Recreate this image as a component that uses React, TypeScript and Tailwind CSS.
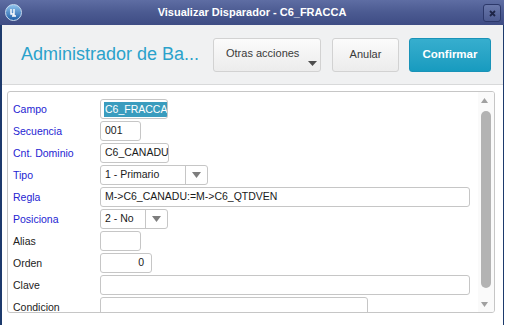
import React from "react";

const font = { fontFamily: '"Liberation Sans", Arial, sans-serif' };

function Label({ text, blue }: { text: string; blue?: boolean }) {
  return (
    <div className={`w-[87px] shrink-0 text-[10.5px] leading-[20px] ${blue ? "text-[#2424d2]" : "text-[#222]"}`}>
      {text}
    </div>
  );
}

function Input({ w, value, right, selected }: { w: number; value?: string; right?: boolean; selected?: boolean }) {
  return (
    <div
      className={`h-[20px] border border-[#c6c6c6] rounded-[3px] bg-white flex items-center px-[3px] text-[10.5px] text-[#1a1a1a] overflow-hidden whitespace-nowrap ${right ? "justify-end pr-[6px]" : ""}`}
      style={{ width: w }}
    >
      {selected ? (
        <span className="bg-[#3a9cbe] text-white px-[1px] leading-[15px]">{value}</span>
      ) : (
        <span className="px-[1px]">{value}</span>
      )}
    </div>
  );
}

function Select({ w, divider, value }: { w: number; divider: number; value: string }) {
  return (
    <div
      className="h-[20px] border border-[#c6c6c6] rounded-[3px] bg-white flex items-center text-[10.5px] text-[#1a1a1a] overflow-hidden"
      style={{ width: w }}
    >
      <div className="h-full flex items-center pl-[4px] border-r border-[#c6c6c6]" style={{ width: divider }}>
        {value}
      </div>
      <div className="flex-1 flex items-center justify-center">
        <svg width="9" height="6" viewBox="0 0 9 6">
          <path d="M0 0 H9 L4.5 6 Z" fill="#7d7d7d" />
        </svg>
      </div>
    </div>
  );
}

function Row({ children }: { children: React.ReactNode }) {
  return <div className="flex items-center h-[20px]">{children}</div>;
}

export default function App() {
  return (
    <div className="w-[505px] h-[325px] overflow-hidden bg-white" style={font}>
      <div className="w-[504px] h-full flex flex-col">
        {/* Title bar */}
        <div className="h-[25px] shrink-0 bg-gradient-to-b from-[#5e6da3] via-[#4b5a91] to-[#3e4c84] relative flex items-center justify-center">
          <div className="absolute left-[5px] top-[4px] w-[17px] h-[17px] rounded-full bg-gradient-to-b from-[#8fc3ec] to-[#1d5fa8] border border-[#c8dcf0] flex items-center justify-center">
            <svg width="9" height="9" viewBox="0 0 9 9">
              <path d="M2 1 V6 H5 M5 1 V8 M3 8 H7" stroke="#fff" strokeWidth="1.4" fill="none" />
            </svg>
          </div>
          <span className="text-white font-bold text-[11px]">Visualizar Disparador - C6_FRACCA</span>
          <div className="absolute right-[3px] top-[4px] w-[18px] h-[18px] rounded-[3px] border border-[#2c386a] bg-gradient-to-b from-[#6a78ab] to-[#4d5b91] flex items-center justify-center">
            <svg width="7" height="7" viewBox="0 0 7 7">
              <path d="M1 1 L6 6 M6 1 L1 6" stroke="#1e2547" strokeWidth="1.8" />
            </svg>
          </div>
        </div>

        {/* Content */}
        <div className="flex-1 flex flex-col border-l-2 border-r border-[#1d3a6c] bg-white">
          {/* Header */}
          <div className="h-[60px] shrink-0 bg-[#f0f1f2] border-b border-[#d8d9da] flex items-center pl-[19px] pr-[12px]">
            <div className="text-[18px] text-[#2ba2cb] flex-1 whitespace-nowrap">Administrador de Ba...</div>
            <div className="relative w-[108px] h-[34px] rounded-[3px] border border-[#d2d2d2] bg-gradient-to-b from-[#fbfbfb] to-[#ececec] flex items-center pl-[12px] pb-[2px] text-[11px] text-[#3a3a3a]">
              Otras acciones
              <svg className="absolute right-[3px] bottom-[5px]" width="9" height="5" viewBox="0 0 9 5">
                <path d="M0 0 H9 L4.5 5 Z" fill="#4d4d4d" />
              </svg>
            </div>
            <div className="ml-[11px] w-[67px] h-[34px] rounded-[3px] border border-[#d2d2d2] bg-gradient-to-b from-[#fbfbfb] to-[#ececec] flex items-center justify-center text-[11px] text-[#3a3a3a]">
              Anular
            </div>
            <div className="ml-[10px] w-[82px] h-[34px] rounded-[3px] border border-[#1993b8] bg-gradient-to-b from-[#36aece] to-[#179bbf] flex items-center justify-center text-[11.5px] font-bold text-white">
              Confirmar
            </div>
          </div>

          {/* Form panel */}
          <div className="mt-[6px] ml-[5px] mr-[8px] h-[222px] border border-[#c6c6c6] rounded-[3px] flex overflow-hidden">
            <div className="flex-1 overflow-hidden pt-[7px] pl-[5px] flex flex-col gap-[2px]">
              <Row>
                <Label text="Campo" blue />
                <Input w={68} value="C6_FRACCA" selected />
              </Row>
              <Row>
                <Label text="Secuencia" blue />
                <Input w={41} value="001" />
              </Row>
              <Row>
                <Label text="Cnt. Dominio" blue />
                <Input w={69} value="C6_CANADU" />
              </Row>
              <Row>
                <Label text="Tipo" blue />
                <Select w={108} divider={85} value="1 - Primario" />
              </Row>
              <Row>
                <Label text="Regla" blue />
                <Input w={370} value="M->C6_CANADU:=M->C6_QTDVEN" />
              </Row>
              <Row>
                <Label text="Posiciona" blue />
                <Select w={68} divider={45} value="2 - No" />
              </Row>
              <Row>
                <Label text="Alias" />
                <Input w={41} value="" />
              </Row>
              <Row>
                <Label text="Orden" />
                <Input w={52} value="0" right />
              </Row>
              <Row>
                <Label text="Clave" />
                <Input w={370} value="" />
              </Row>
              <Row>
                <Label text="Condicion" />
                <Input w={268} value="" />
              </Row>
            </div>
            {/* Scrollbar */}
            <div className="w-[16px] shrink-0 relative bg-[#fafafa]">
              <svg className="absolute left-[3px] top-[6px]" width="7" height="5" viewBox="0 0 7 5">
                <path d="M0 5 H7 L3.5 0 Z" fill="#a0a0a0" />
              </svg>
              <div className="absolute left-[3px] top-[19px] w-[10px] h-[177px] rounded-full bg-[#b3b3b3]" />
              <svg className="absolute left-[3px] top-[210px]" width="7" height="5" viewBox="0 0 7 5">
                <path d="M0 0 H7 L3.5 5 Z" fill="#a0a0a0" />
              </svg>
            </div>
          </div>
        </div>
      </div>
    </div>
  );
}
